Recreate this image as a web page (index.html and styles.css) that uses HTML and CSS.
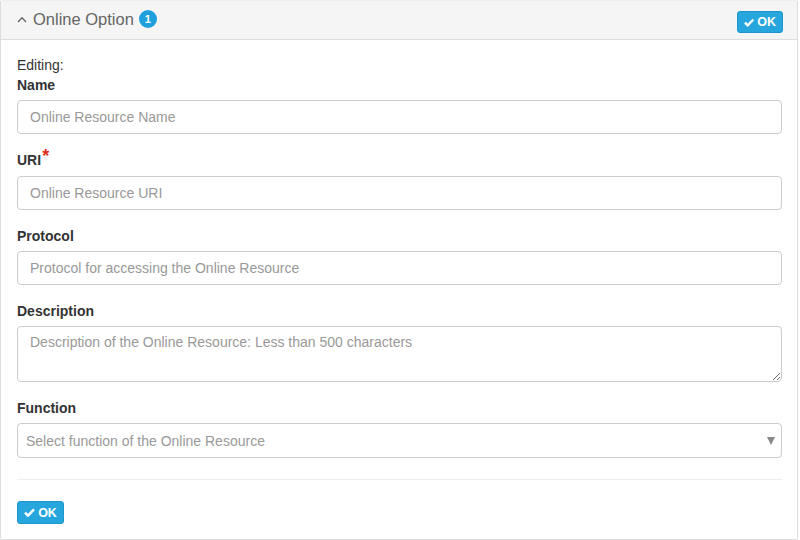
FILE: index.html
```html
<!DOCTYPE html>
<html>
<head>
<meta charset="utf-8">
<link rel="stylesheet" href="styles.css">
</head>
<body>
<div class="panel">
  <div class="panel-heading">
    <div class="title">
      <svg class="chev" width="10" height="7" viewBox="0 0 10 7"><polyline points="1,6 5,1.8 9,6" fill="none" stroke="#666" stroke-width="1.3"/></svg>
      <span>Online Option</span>
      <span class="badge">1</span>
    </div>
    <button class="btn btn-top"><svg class="check" width="11" height="9" viewBox="0 0 11 9"><path d="M1 4.6 L4 7.6 L10 1.4" fill="none" stroke="#fff" stroke-width="2.5"/></svg>OK</button>
  </div>
  <div class="panel-body">
    <div class="editing">Editing:</div>
    <div class="group">
      <label class="lbl">Name</label>
      <input class="ctl" type="text" placeholder="Online Resource Name">
    </div>
    <div class="group">
      <label class="lbl lbl-req">URI<span class="req">*</span></label>
      <input class="ctl" type="text" placeholder="Online Resource URI">
    </div>
    <div class="group">
      <label class="lbl">Protocol</label>
      <input class="ctl" type="text" placeholder="Protocol for accessing the Online Resource">
    </div>
    <div class="group">
      <label class="lbl">Description</label>
      <textarea class="ctl area" placeholder="Description of the Online Resource: Less than 500 characters"></textarea>
    </div>
    <div class="group last">
      <label class="lbl">Function</label>
      <div class="select">
        <span>Select function of the Online Resource</span>
        <span class="arrow"></span>
      </div>
    </div>
    <hr class="sep">
    <button class="btn btn-bottom"><svg class="check" width="11" height="9" viewBox="0 0 11 9"><path d="M1 4.6 L4 7.6 L10 1.4" fill="none" stroke="#fff" stroke-width="2.5"/></svg>OK</button>
  </div>
</div>
</body>
</html>
```
FILE: styles.css
```css
* { box-sizing: border-box; }
html, body { margin: 0; padding: 0; background: #fff; }
body { font-family: "Liberation Sans", Arial, sans-serif; font-size: 14px; color: #333; }

.panel {
  width: 798px;
  height: 540px;
  border: 1px solid #ddd;
  border-top-color: #eee;
  border-radius: 2px;
}
.panel-heading {
  height: 39px;
  background: #f5f5f5;
  border-bottom: 1px solid #ddd;
  display: flex;
  justify-content: space-between;
  align-items: flex-start;
  padding: 0 14px 0 16px;
}
.title {
  display: flex;
  align-items: center;
  margin-top: 7px;
  height: 22px;
  font-size: 16.5px;
  color: #666;
}
.chev { margin-right: 6px; margin-top: 0; }
.badge {
  display: inline-flex;
  align-items: center;
  justify-content: center;
  width: 18px;
  height: 18px;
  border-radius: 50%;
  background: #1f9fdc;
  color: #fff;
  font-size: 11px;
  font-weight: bold;
  margin-left: 5px;
}
.btn {
  display: inline-flex;
  align-items: center;
  justify-content: center;
  height: 22px;
  padding: 0 6px;
  background: #27a6de;
  border: 1px solid #1e95cc;
  border-radius: 3px;
  color: #fff;
  font-family: "Liberation Sans", Arial, sans-serif;
  font-size: 12.5px;
  font-weight: bold;
}
.check { margin-right: 3px; }
.btn-top { width: 46px; margin-top: 10px; }
.btn-bottom { width: 47px; height: 23px; }

.panel-body { padding: 15px 15px 0 16px; }
.editing { line-height: 20px; }
.group { margin-bottom: 16px; }
.group.last { margin-bottom: 0; }
.lbl {
  display: block;
  font-weight: bold;
  line-height: 20px;
  margin-bottom: 5px;
}
.lbl-req { margin-bottom: 6px; }
.req { color: #e0301e; font-size: 18px; line-height: 14px; vertical-align: top; position: relative; top: -1px; margin-left: 1px; }
.ctl {
  display: block;
  width: 100%;
  height: 34px;
  border: 1px solid #ccc;
  border-radius: 4px;
  padding: 6px 12px;
  font-family: "Liberation Sans", Arial, sans-serif;
  font-size: 14px;
  color: #555;
  background: #fff;
}
.ctl::placeholder { color: #999; }
.area { height: 56px; resize: vertical; padding-top: 7px; }
.select {
  display: flex;
  justify-content: space-between;
  align-items: center;
  height: 35px;
  border: 1px solid #ccc;
  border-radius: 4px;
  padding: 0 6px 0 8px;
  color: #999;
}
.arrow {
  width: 0; height: 0;
  border-left: 4px solid transparent;
  border-right: 4px solid transparent;
  border-top: 8px solid #888;
}
.sep {
  border: 0;
  border-top: 1px solid #eee;
  margin: 21px 0 21px;
}
```
